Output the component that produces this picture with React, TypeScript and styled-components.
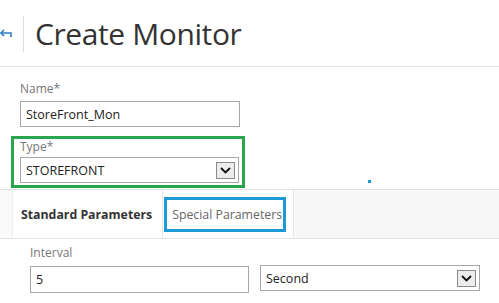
import styled, { createGlobalStyle } from "styled-components";

const GlobalStyle = createGlobalStyle`
    html, body {
        margin: 0;
        padding: 0;
        background: #ffffff;
    }
    body {
        font-family: "Open Sans", "Noto Sans", sans-serif;
        overflow: hidden;
    }
`;

const Page = styled.div`
    position: relative;
    width: 499px;
    height: 303px;
    overflow: hidden;
    background: #fff;
`;

const Header = styled.div`
    display: flex;
    align-items: center;
    height: 66px;
    border-bottom: 1px solid #e6e6e6;
`;

const BackButton = styled.div`
    width: 24px;
    height: 36px;
    display: flex;
    align-items: center;
    border-right: 1px solid #dcdcdc;
    box-sizing: border-box;
    margin-top: 2px;
`;

const Title = styled.h1`
    margin: 0 0 0 11px;
    font-size: 30px;
    font-weight: 400;
    color: #333;
    letter-spacing: -0.4px;
`;

const Form = styled.div`
    display: flex;
    flex-direction: column;
    padding: 14px 0 0 20px;
`;

const Label = styled.div`
    font-size: 12px;
    line-height: 16px;
    color: #777;
    margin-bottom: 4px;
`;

const Field = styled.div<{ $width: number }>`
    box-sizing: border-box;
    width: ${p => p.$width}px;
    height: 26px;
    border: 1px solid #a7a7a7;
    display: flex;
    align-items: center;
    justify-content: space-between;
    padding: 0 3px 0 5px;
    font-size: 12.5px;
    color: #222;
`;

const Highlight = styled.div`
    box-sizing: border-box;
    width: 234px;
    margin: 9px 0 0 -9px;
    padding: 0 0 2px 6px;
    border: 3px solid #2aa44f;

    ${Label} {
        margin-bottom: 2px;
    }
`;

const DropButton = styled.div`
    box-sizing: border-box;
    width: 19px;
    height: 17px;
    border: 1px solid #8a8a8a;
    background: #ececec;
    display: flex;
    align-items: center;
    justify-content: center;
`;

const TabBar = styled.div`
    display: flex;
    height: 48px;
    margin-top: 1px;
    border-top: 1px solid #e2e2e2;
    border-bottom: 1px solid #e2e2e2;
    background: #f7f7f7;
`;

const Tab = styled.div<{ $active?: boolean }>`
    display: flex;
    align-items: center;
    padding: 0 ${p => (p.$active ? "10px" : "7px")} 0 ${p => (p.$active ? "8px" : "1px")};
    background: #fff;
    border-right: 1px solid #e6e6e6;
    font-size: 12.3px;
    font-weight: ${p => (p.$active ? 700 : 400)};
    color: ${p => (p.$active ? "#333" : "#666")};
`;

const LeftStrip = styled.div`
    width: 12px;
    border-right: 1px solid #eeeeee;
    background: #fafafa;
`;

const TabOutline = styled.div`
    box-sizing: border-box;
    height: 35px;
    display: flex;
    align-items: center;
    padding: 0 1px 0 5px;
    border: 3px solid #1c9ad6;
`;

const Params = styled.div`
    padding: 6px 0 0 30px;
`;

const Row = styled.div`
    display: flex;
    align-items: flex-end;
    gap: 11px;
`;

const Dot = styled.div`
    position: absolute;
    left: 368px;
    top: 180px;
    width: 3px;
    height: 3px;
    background: #1c9ad6;
`;

const Chevron = () => (
    <svg width="11" height="7" viewBox="0 0 11 7">
        <path d="M1 1 L5.5 5.5 L10 1" fill="none" stroke="#111" strokeWidth="1.8" />
    </svg>
);

const BackArrow = () => (
    <svg width="13" height="10" viewBox="0 0 13 10">
        <path d="M1 4 H11 V8" fill="none" stroke="#2a7fc4" strokeWidth="1.6" />
        <path d="M4 1 L1 4 L4 7" fill="none" stroke="#2a7fc4" strokeWidth="1.6" />
    </svg>
);

export default function App() {
    return (
        <Page>
            <GlobalStyle />
            <Header>
                <BackButton>
                    <BackArrow />
                </BackButton>
                <Title>Create Monitor</Title>
            </Header>
            <Form>
                <Label>Name*</Label>
                <Field $width={220}>StoreFront_Mon</Field>
                <Highlight>
                    <Label>Type*</Label>
                    <Field $width={219}>
                        STOREFRONT
                        <DropButton>
                            <Chevron />
                        </DropButton>
                    </Field>
                </Highlight>
            </Form>
            <TabBar>
                <LeftStrip />
                <Tab $active>Standard Parameters</Tab>
                <Tab>
                    <TabOutline>Special Parameters</TabOutline>
                </Tab>
            </TabBar>
            <Params>
                <Label>Interval</Label>
                <Row>
                    <Field $width={219} style={{ height: 27 }}>5</Field>
                    <Field $width={220} style={{ marginBottom: 2 }}>
                        Second
                        <DropButton>
                            <Chevron />
                        </DropButton>
                    </Field>
                </Row>
            </Params>
            <Dot />
        </Page>
    );
}
